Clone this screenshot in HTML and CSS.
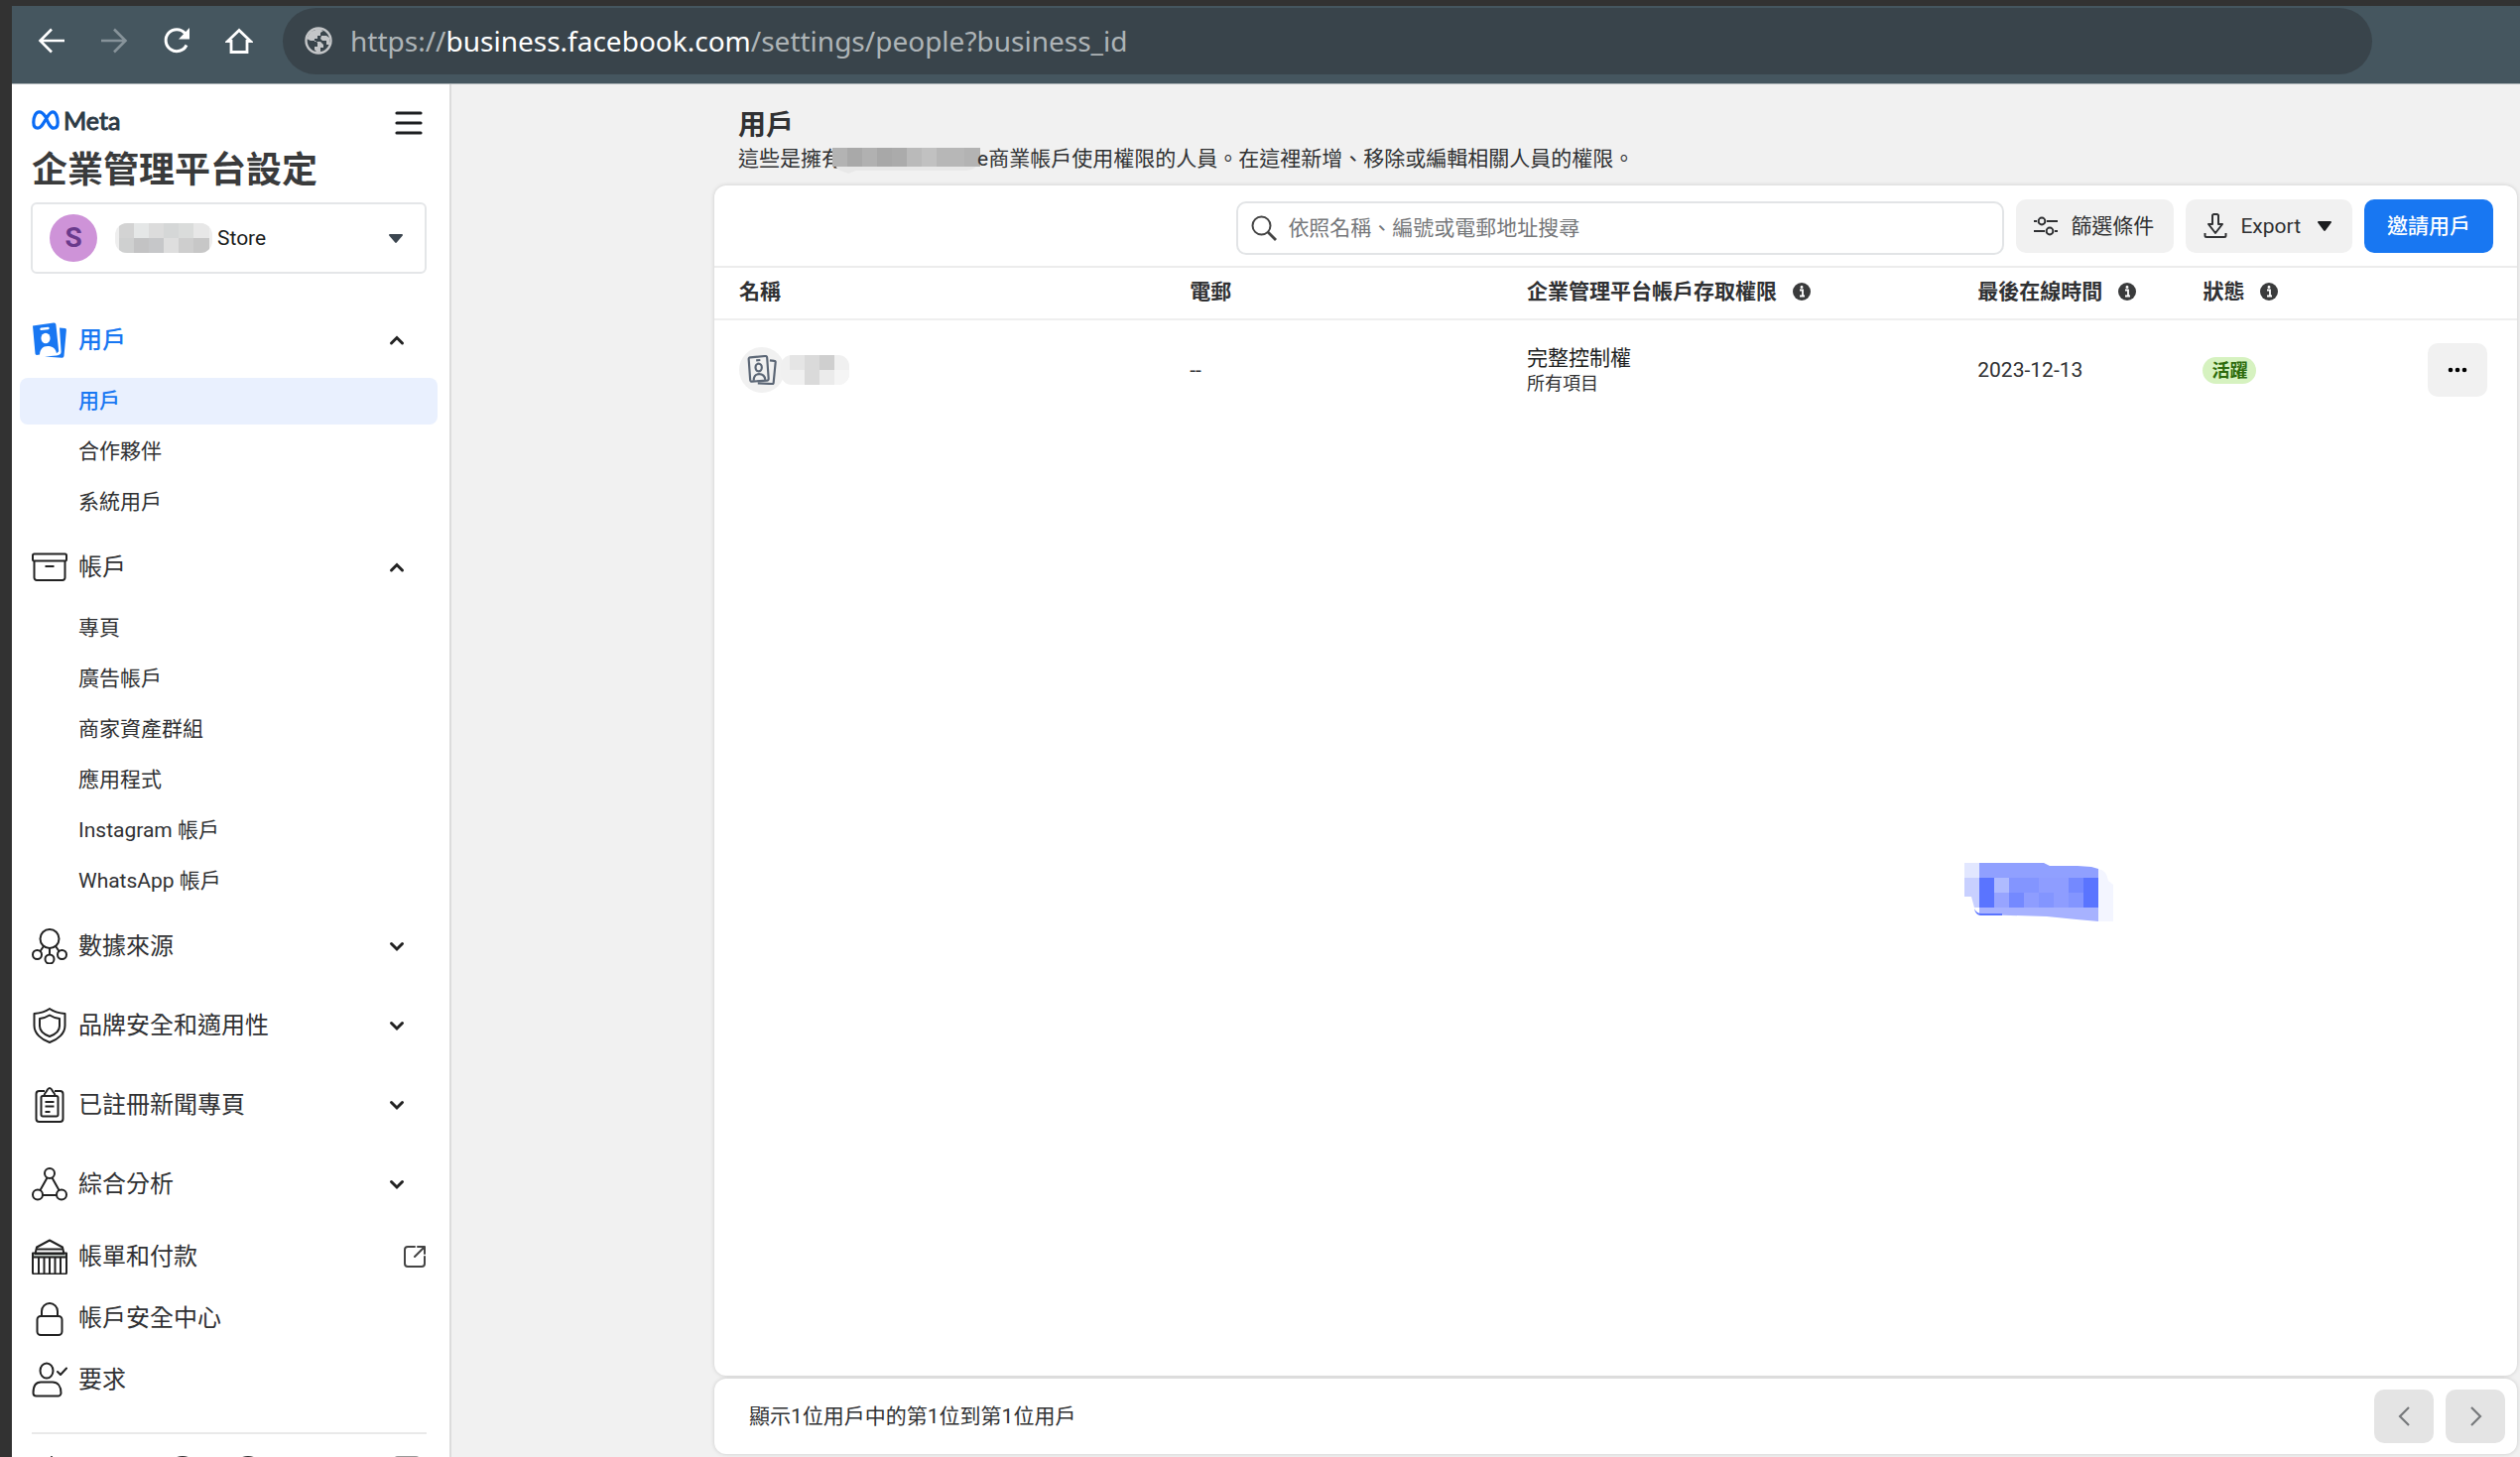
FILE: index.html
```html
<!DOCTYPE html>
<html lang="zh-Hant">
<head>
<meta charset="utf-8">
<meta name="viewport" content="width=device-width, initial-scale=1">
<title>企業管理平台設定</title>
<link rel="stylesheet" href="styles.css">
</head>
<body>
<header class="browser">
  <button class="nav-btn" type="button" aria-label="上一頁"><svg viewBox="0 0 28 28"><path d="M27 14H3M14 2.500 2.500 14 14 25.500" fill="none" stroke="currentColor" stroke-width="2.600"/></svg></button>
  <button class="nav-btn nav-btn-off" type="button" aria-label="下一頁" disabled><svg viewBox="0 0 28 28"><path d="M1 14h24M14 2.500 25.500 14 14 25.500" fill="none" stroke="currentColor" stroke-width="2.600"/></svg></button>
  <button class="nav-btn" type="button" aria-label="重新載入"><svg viewBox="0 0 28 28"><path d="M24 18.500A11 11 0 1 1 22.500 6.500" fill="none" stroke="currentColor" stroke-width="3"/><path d="M27 1v11.500H16z" fill="currentColor"/></svg></button>
  <button class="nav-btn" type="button" aria-label="首頁"><svg viewBox="0 0 28 28"><path d="M14 3.500 2.500 14.500H6V25.500H22V14.500H25.500z" fill="none" stroke="currentColor" stroke-width="2.800"/></svg></button>
  <div class="address">
    <svg class="globe" viewBox="0 0 28 28"><circle cx="14" cy="14" r="12.500" fill="none" stroke="currentColor" stroke-width="2.400"/><path d="M14 2 6 5 2 12l4 2h5l2 2v4h-3v3l3 3 3-1v-4h3v-3l-3-3h-6v-3h3V9h3V6l3-2z" fill="currentColor"/><path d="M17 9h5l3 2v7h-3v-4h-4l-2-2z" fill="currentColor"/></svg>
    <div class="url" role="textbox" aria-label="網址">https://<span class="url-host">business.facebook.com</span>/settings/people?business_id</div>
  </div>
</header>

<div class="app">
  <aside class="sidebar">
    <div class="brand-row">
      <div class="brand">
        <svg class="brand-mark" viewBox="0 0 28 20"><path d="M14 7C11.500 3 9.500 1.800 7.600 1.800 4 1.800 1.800 7 1.800 12.300c0 3.600 1.600 5.900 4.200 5.900 3 0 4.800-3 8-8.700s5-7.700 7-7.700c3.500 0 5.200 5.700 5.200 10.500 0 3.600-1.400 5.900-4 5.900-3.200 0-5.200-4-8.200-11.200z" fill="none" stroke="#0a6cf5" stroke-width="3.200" stroke-linejoin="round"/></svg>
        <span>Meta</span>
      </div>
      <button class="menu-btn" type="button" aria-label="選單"><svg viewBox="0 0 28 24"><path d="M2 2h24M2 12h24M2 22h24" stroke="currentColor" stroke-width="3.200" stroke-linecap="round"/></svg></button>
    </div>
    <h1 class="side-title">企業管理平台設定</h1>
    <button class="account" type="button">
      <span class="account-avatar">S</span>
      <svg class="account-mask" viewBox="0 0 98 30"><defs><clipPath id="mask-a"><rect width="98" height="30" rx="12"/></clipPath></defs><g clip-path="url(#mask-a)"><path fill="#eee" d="M0 0h98v30H0z"/><path fill="#d3d3d3" d="M4 0h15v15H4z"/><path fill="#e5e7e7" d="M19 0h15v15H19z"/><path fill="#dcdcdc" d="M34 0h15v15H34z"/><path fill="#d5d7d7" d="M49 0h15v15H49z"/><path fill="#dadcdb" d="M64 0h15v15H64z"/><path fill="#e7e7e7" d="M79 0h16v15H79z"/><path fill="#cfd0d0" d="M4 15h15v15H4z"/><path fill="#c3c3c4" d="M19 15h15v15H19z"/><path fill="#c6c7c9" d="M34 15h15v15H34z"/><path fill="#dedede" d="M49 15h15v15H49z"/><path fill="#cecece" d="M64 15h15v15H64z"/><path fill="#c7c7c7" d="M79 15h16v15H79z"/></g></svg>
      <span class="account-name">Store</span>
      <svg class="caret" viewBox="0 0 16 10"><path d="M2 1h12a1 1 0 0 1 .8 1.600L9 9.300a1.300 1.300 0 0 1-2 0L1.200 2.600A1 1 0 0 1 2 1z" fill="#3c4650"/></svg>
    </button>

    <nav class="nav">
      <section class="group">
        <button class="group-head group-head-on" type="button">
          <svg class="icon" viewBox="0 0 36 36"><path d="M1 3.500 22 .500a2 2 0 0 1 2.400 1.800l2.800 27-2.200 2c-1-5-4-7.300-9-7.300s-7.500 3-8 8.500L5 33a1.500 1.500 0 0 1-1.500-1.400z" fill="currentColor"/><path d="M28 5.500 33.500 6a1.500 1.500 0 0 1 1.400 1.700L32.500 34a2 2 0 0 1-2.200 1.700L13 34.500l12-1c3-.300 4.700-1.500 4.600-4z" fill="currentColor"/><ellipse cx="14" cy="16" rx="4.600" ry="5.200" fill="#fff"/><path d="m9.500 6.800 7-.8" stroke="#fff" stroke-width="2.400" stroke-linecap="round"/></svg>
          <span class="group-label">用戶</span>
          <svg class="chev" viewBox="0 0 16 16"><path d="m2.500 11 5.500-5.500 5.500 5.500" fill="none" stroke="currentColor" stroke-width="3" stroke-linecap="round"/></svg>
        </button>
        <ul class="items">
          <li><a class="item item-on" href="#">用戶</a></li>
          <li><a class="item" href="#">合作夥伴</a></li>
          <li><a class="item" href="#">系統用戶</a></li>
        </ul>
      </section>
      <section class="group">
        <button class="group-head" type="button">
          <svg class="icon" viewBox="0 0 36 36"><g fill="none" stroke="currentColor" stroke-width="2" stroke-linejoin="round"><rect x="1" y="4.500" width="34" height="7" rx="1.500"/><path d="M2.500 11.500v17a2.500 2.500 0 0 0 2.500 2.500h26a2.500 2.500 0 0 0 2.500-2.500v-17M13.500 17h9"/></g></svg>
          <span class="group-label">帳戶</span>
          <svg class="chev" viewBox="0 0 16 16"><path d="m2.500 11 5.500-5.500 5.500 5.500" fill="none" stroke="currentColor" stroke-width="3" stroke-linecap="round"/></svg>
        </button>
        <ul class="items">
          <li><a class="item" href="#">專頁</a></li>
          <li><a class="item" href="#">廣告帳戶</a></li>
          <li><a class="item" href="#">商家資產群組</a></li>
          <li><a class="item" href="#">應用程式</a></li>
          <li><a class="item" href="#">Instagram 帳戶</a></li>
          <li><a class="item" href="#">WhatsApp 帳戶</a></li>
        </ul>
      </section>
      <section class="group">
        <button class="group-head" type="button">
          <svg class="icon" viewBox="0 0 36 36"><g fill="none" stroke="currentColor" stroke-width="2"><circle cx="18" cy="10.500" r="9.500"/><circle cx="5.500" cy="26.500" r="4.500"/><circle cx="18" cy="31" r="4.500"/><circle cx="30.500" cy="26.500" r="4.500"/><path d="M12 18 8.500 23M24 18l3.500 5M18 20v6.500"/></g></svg>
          <span class="group-label">數據來源</span>
          <svg class="chev" viewBox="0 0 16 16"><path d="m2.500 5.500 5.500 5.500 5.500-5.500" fill="none" stroke="currentColor" stroke-width="3" stroke-linecap="round"/></svg>
        </button>
      </section>
      <section class="group">
        <button class="group-head" type="button">
          <svg class="icon" viewBox="0 0 36 36"><g fill="none" stroke="currentColor" stroke-width="2" stroke-linejoin="round"><path d="M18 1c4 3 9 4.500 15.500 5v12c0 8-7 14-15.500 17C9.500 32 2.500 26 2.500 18V6C9 5.500 14 4 18 1z"/><path d="M18 7.500c3 2 6 3 10 3.500v7.500c0 5-4.500 8.500-10 10.500-5.500-2-10-5.500-10-10.500V11c4-.500 7-1.500 10-3.500z"/></g></svg>
          <span class="group-label">品牌安全和適用性</span>
          <svg class="chev" viewBox="0 0 16 16"><path d="m2.500 5.500 5.500 5.500 5.500-5.500" fill="none" stroke="currentColor" stroke-width="3" stroke-linecap="round"/></svg>
        </button>
      </section>
      <section class="group">
        <button class="group-head" type="button">
          <svg class="icon" viewBox="0 0 36 36"><g fill="none" stroke="currentColor" stroke-width="2" stroke-linejoin="round"><path d="M13 4H7.500A3 3 0 0 0 4.500 7v25a3 3 0 0 0 3 3h21a3 3 0 0 0 3-3V7a3 3 0 0 0-3-3H23"/><path d="M13 9H11a1.500 1.500 0 0 0-1.500 1.500V28A1.500 1.500 0 0 0 11 29.500h14a1.500 1.500 0 0 0 1.500-1.500V10.500A1.500 1.500 0 0 0 25 9H12.500c0-3 1.500-3 2.500-5s1.500-3 3-3 2 1 3 3 2.500 2 2.500 5M13.500 15h9M13.500 19.500h9M13.500 25h5"/></g></svg>
          <span class="group-label">已註冊新聞專頁</span>
          <svg class="chev" viewBox="0 0 16 16"><path d="m2.500 5.500 5.500 5.500 5.500-5.500" fill="none" stroke="currentColor" stroke-width="3" stroke-linecap="round"/></svg>
        </button>
      </section>
      <section class="group">
        <button class="group-head" type="button">
          <svg class="icon" viewBox="0 0 36 36"><g fill="none" stroke="currentColor" stroke-width="2"><circle cx="18" cy="7" r="5"/><circle cx="6" cy="28.500" r="5"/><circle cx="30" cy="28.500" r="5"/><path d="M15.500 11.500 8.500 24M20.500 11.500l7 12.500M11 29h14"/></g></svg>
          <span class="group-label">綜合分析</span>
          <svg class="chev" viewBox="0 0 16 16"><path d="m2.500 5.500 5.500 5.500 5.500-5.500" fill="none" stroke="currentColor" stroke-width="3" stroke-linecap="round"/></svg>
        </button>
      </section>
      <a class="link-row" href="#">
        <svg class="icon" viewBox="0 0 36 36"><path d="M1 15h34v4H1z" fill="#c3cbc6"/><g fill="none" stroke="currentColor" stroke-width="2" stroke-linejoin="round"><path d="M18 1.500 5 8.500 3.500 15h29L31 8.500zM5 10.500h26M1 14.500h34v4H1zM1 18.500V34a1.500 1.500 0 0 0 1.500 1.500h31A1.500 1.500 0 0 0 35 34V18.500M7 18.500v17M12.500 18.500v17M18 18.500v17M23.500 18.500v17M29 18.500v17"/></g></svg>
        <span class="group-label">帳單和付款</span>
        <svg class="ext" viewBox="0 0 24 24"><path d="M12 2H5a3 3 0 0 0-3 3v14a3 3 0 0 0 3 3h14a3 3 0 0 0 3-3v-7M15 2h7v7M21.500 2.500 12 12" fill="none" stroke="currentColor" stroke-width="2" stroke-linecap="round" stroke-linejoin="round"/></svg>
      </a>
      <a class="link-row" href="#">
        <svg class="icon" viewBox="0 0 36 36"><g fill="none" stroke="currentColor" stroke-width="2"><rect x="5.500" y="16" width="25" height="19" rx="3.500"/><path d="M10 16v-5a8 8 0 0 1 16 0v5"/></g></svg>
        <span class="group-label">帳戶安全中心</span>
      </a>
      <a class="link-row" href="#">
        <svg class="icon" viewBox="0 0 36 36"><g fill="none" stroke="currentColor" stroke-width="2" stroke-linecap="round" stroke-linejoin="round"><ellipse cx="15" cy="9" rx="6.500" ry="7.500"/><path d="M9 20.500h12c5 0 8.500 4 8.500 11a3 3 0 0 1-3 3h-22a3 3 0 0 1-3-3c0-7 2.500-11 7.500-11zM26 10l3 3 6-6.500"/></g></svg>
        <span class="group-label">要求</span>
      </a>
    </nav>
    <div class="side-foot">
      <button type="button" aria-label="設定"><svg viewBox="0 0 32 32"><path d="m16 1 4 6h9v18H3V7h9z" fill="none" stroke="currentColor" stroke-width="2"/></svg></button>
      <button type="button" aria-label="通知"><svg viewBox="0 0 32 32"><path d="M16 1v4M5 25V14a11 9 0 0 1 22 0v11z" fill="none" stroke="currentColor" stroke-width="3"/></svg></button>
      <button type="button" aria-label="搜尋"><svg viewBox="0 0 32 32"><circle cx="16" cy="16" r="15" fill="none" stroke="currentColor" stroke-width="2"/></svg></button>
      <button type="button" aria-label="說明"><svg viewBox="0 0 32 32"><circle cx="16" cy="16" r="15" fill="none" stroke="currentColor" stroke-width="2"/></svg></button>
      <button class="push" type="button" aria-label="收合"><svg viewBox="0 0 32 32"><rect x="4" y="1" width="24" height="28" rx="3" fill="none" stroke="#999" stroke-width="2"/></svg></button>
    </div>
  </aside>

  <main class="main">
    <div class="page-head">
      <h2>用戶</h2>
      <p>這些是擁有<svg class="desc-mask" viewBox="0 0 150 30"><path fill="#e8e8e8" d="M2 10h146v8q-4 9-14 9H24l-8 3-8-3q-6-3-6-9z"/><path fill="#b3b3b3" d="M0 4h149v19H0z"/><path fill="#a9a9a9" d="M15 4h15v19H15z"/><path fill="#b1b1b1" d="M30 4h15v19H30z"/><path fill="#a8a8a8" d="M45 4h15v19H45z"/><path fill="#ababab" d="M60 4h15v19H60z"/><path fill="#bababa" d="M75 4h15v19H75z"/><path fill="#c1c1c1" d="M90 4h15v19H90z"/><path fill="#b7b7b7" d="M105 4h28v19h-28z"/></svg>e商業帳戶使用權限的人員。在這裡新增、移除或編輯相關人員的權限。</p>
    </div>
    <div class="card list-card">
      <div class="toolbar">
        <div class="search">
          <svg viewBox="0 0 26 26"><circle cx="10.500" cy="10.500" r="9" fill="none" stroke="#444" stroke-width="2"/><path d="m17 17 8 8" stroke="#444" stroke-width="2.800"/></svg>
          <label class="sr" for="q">搜尋用戶</label>
          <input id="q" type="text" placeholder="依照名稱、編號或電郵地址搜尋">
        </div>
        <button class="btn" type="button">
          <svg class="btn-icon" viewBox="0 0 26 26"><g fill="none" stroke="currentColor" stroke-width="2"><circle cx="9" cy="8" r="3.400"/><circle cx="17" cy="18" r="3.400"/><path d="M1 8h3M14 8h11M1 18h11M22 18h3"/></g></svg>
          <span>篩選條件</span>
        </button>
        <button class="btn" type="button">
          <svg class="btn-icon" viewBox="0 0 26 26"><path d="M10 2a2 2 0 0 1 2-1h2a2 2 0 0 1 2 1v9h4l-7 9-7-9h4zM2.500 20v2.500A1.500 1.500 0 0 0 4 24h18a1.500 1.500 0 0 0 1.500-1.500V20" fill="none" stroke="currentColor" stroke-width="2" stroke-linejoin="round"/></svg>
          <span>Export</span>
          <svg class="caret btn-caret" viewBox="0 0 16 10"><path d="M2 0h12a1 1 0 0 1 .8 1.600L9 9.300a1.300 1.300 0 0 1-2 0L1.200 1.600A1 1 0 0 1 2 0z" fill="#1c1e21"/></svg>
        </button>
        <button class="btn btn-primary" type="button">邀請用戶</button>
      </div>
      <table class="people">
        <colgroup><col class="c-name"><col class="c-mail"><col class="c-access"><col class="c-last"><col class="c-status"><col class="c-more"></colgroup>
        <thead>
          <tr>
            <th scope="col">名稱</th>
            <th scope="col">電郵</th>
            <th scope="col"><span class="th">企業管理平台帳戶存取權限 <svg viewBox="0 0 18 18"><circle cx="9" cy="9" r="9" fill="#3a3b3c"/><path d="M7 7.500h3V13M7 13.500h5" fill="none" stroke="#fff" stroke-width="1.800"/><circle cx="9" cy="4.500" r="1.400" fill="#fff"/></svg></span></th>
            <th scope="col"><span class="th">最後在線時間 <svg viewBox="0 0 18 18"><circle cx="9" cy="9" r="9" fill="#3a3b3c"/><path d="M7 7.500h3V13M7 13.500h5" fill="none" stroke="#fff" stroke-width="1.800"/><circle cx="9" cy="4.500" r="1.400" fill="#fff"/></svg></span></th>
            <th scope="col"><span class="th">狀態 <svg viewBox="0 0 18 18"><circle cx="9" cy="9" r="9" fill="#3a3b3c"/><path d="M7 7.500h3V13M7 13.500h5" fill="none" stroke="#fff" stroke-width="1.800"/><circle cx="9" cy="4.500" r="1.400" fill="#fff"/></svg></span></th>
            <th></th>
          </tr>
        </thead>
        <tbody>
          <tr>
            <td><div class="person">
              <span class="person-icon"><svg viewBox="0 0 36 36"><g fill="none" stroke="#5b6675" stroke-width="2.600" stroke-linejoin="round"><path d="M2 5a2 2 0 0 1 1.800-2.200L22 1.200a2 2 0 0 1 2.200 1.800L26 28.500a2 2 0 0 1-1.800 2.200L6 32a2 2 0 0 1-2.200-1.800z"/><path d="M27.500 6.500 33 7a1.500 1.500 0 0 1 1.400 1.700L32 33.500a1.500 1.500 0 0 1-1.700 1.400L13 34"/><ellipse cx="14" cy="15" rx="3.800" ry="4.600"/><path d="M8 31c0-6 2-8 6.500-8s7 2 7.500 7M11 6.500l5-.5"/></g></svg></span>
              <svg class="person-mask" viewBox="0 0 69 30"><defs><clipPath id="mask-b"><rect width="69" height="30" rx="11"/></clipPath></defs><g clip-path="url(#mask-b)"><path fill="#f0f0f0" d="M0 0h69v30H0z"/><path fill="#e5e5e5" d="M9 0h15v15H9z"/><path fill="#dadada" d="M24 0h15v30H24z"/><path fill="#cfcfcf" d="M39 0h15v15H39z"/><path fill="#ebebeb" d="M39 15h15v15H39z"/><path fill="#f5f5f5" d="M54 15h15v15H54z"/></g></svg>
            </div></td>
            <td>--</td>
            <td><div class="access">完整控制權</div><div class="access-sub">所有項目</div></td>
            <td>2023-12-13</td>
            <td><span class="badge">活躍</span></td>
            <td class="more-cell"><button class="sq" type="button" aria-label="更多"><svg viewBox="0 0 20 6"><circle cx="3" cy="3" r="2.300"/><circle cx="10" cy="3" r="2.300"/><circle cx="17" cy="3" r="2.300"/></svg></button></td>
          </tr>
        </tbody>
      </table>
    </div>
    <div class="card foot-card">
      <span>顯示1位用戶中的第1位到第1位用戶</span>
      <div class="pager">
        <button class="sq sq-off" type="button" aria-label="上一頁" disabled><svg viewBox="0 0 20 22"><path d="M15 2 6 11l9 9" fill="none" stroke="#77797c" stroke-width="2.200"/></svg></button>
        <button class="sq sq-off" type="button" aria-label="下一頁" disabled><svg viewBox="0 0 20 22"><path d="m6 2 9 9-9 9" fill="none" stroke="#77797c" stroke-width="2.200"/></svg></button>
      </div>
    </div>
    <svg class="blot" viewBox="0 0 150 60"><path fill="#e2e7ff" d="M0 0h15v15H0z"/><path fill="#c8d0ff" d="M0 15h15v30h-5L7 34H0z"/><path fill="#90a0ff" d="M15 0h65l6 3h28l14 1 7 2v10H15z"/><path fill="#a7b2ff" d="M15 45h120v14l-22-2-30-3-68-2z"/><path fill="#8395ff" d="M15 15h120v30H15z"/><path fill="#5a74ff" d="M15 15h15v30H15zM120 15h15v30h-15z"/><path fill="#afbbff" d="M30 15h15v15H30z"/><path fill="#97a4ff" d="M30 30h15v15H30z"/><path fill="#7489ff" d="M45 30h15v15H45zM105 15h15v15h-15z"/><path fill="#8e9dff" d="M60 30h15v15H60zM90 15h15v30H90zM75 15h15v15H75z"/><path fill="#5a74ff" d="M10 46q2 5 7 5h21v2H16q-5-1-6-7z"/><path fill="#f3f5ff" d="M135 6q8 1 10 12l5 4v37h-15z"/></svg>
  </main>
</div>
</body>
</html>
```
FILE: styles.css
```css
*, *::before, *::after { box-sizing: border-box; }

body {
  margin: 0;
  height: 100vh;
  padding: 6px 0 0 12px;
  display: flex;
  flex-direction: column;
  overflow: hidden;
  background: #323232;
  color: #303133;
  font-family: Roboto, "Noto Sans CJK TC", sans-serif;
  font-size: 21px;
  line-height: 28px;
}

button, input { font: inherit; color: inherit; }
button { border: 0; padding: 0; background: none; cursor: pointer; }
a { color: inherit; text-decoration: none; }
svg { display: block; flex: none; }
h1, h2, p, ul { margin: 0; padding: 0; }
ul { list-style: none; }

.sr {
  position: absolute;
  width: 1px;
  height: 1px;
  overflow: hidden;
  clip-path: inset(50%);
}

/* Browser bar */
.browser {
  flex: none;
  display: flex;
  align-items: center;
  gap: 35px;
  height: 79px;
  padding: 1px 149px 9px 26px;
  background: #45565f;
  border-bottom: 1px solid #a9b0b4;
}
.nav-btn { width: 28px; height: 28px; color: #fff; }
.nav-btn-off { color: #87939a; }
.address {
  flex: 1;
  display: flex;
  align-items: center;
  gap: 18px;
  height: 67px;
  margin-left: -5px;
  padding-left: 22px;
  border-radius: 34px;
  background: #39444b;
}
.globe { width: 28px; height: 28px; color: #c4c6c8; }
.url {
  font-family: "Noto Sans", sans-serif;
  font-size: 28px;
  line-height: 36px;
  color: #aeb4b7;
  white-space: nowrap;
}
.url-host { color: #fff; }

.app { flex: 1; min-height: 0; display: flex; }

/* Sidebar */
.sidebar {
  flex: none;
  display: flex;
  flex-direction: column;
  width: 443px;
  padding-top: 18px;
  overflow: hidden;
  background: #fff;
  border-right: 2px solid #dcdcdc;
}
.brand-row {
  flex: none;
  display: flex;
  justify-content: space-between;
  align-items: center;
  height: 36px;
  padding: 0 27px 0 20px;
}
.brand {
  display: flex;
  align-items: center;
  gap: 4px;
  font-family: Lato, sans-serif;
  font-size: 25px;
  color: #2c3a45;
}
.brand span { -webkit-text-stroke: 1px #2c3a45; }
.brand-mark { width: 28px; height: 20px; }
.menu-btn { padding-top: 6px; color: #1c1e21; }
.menu-btn svg { width: 28px; height: 24px; }
.side-title {
  flex: none;
  margin: 9px 20px 0;
  color: #3a3b3c;
  font-size: 36px;
  line-height: 48px;
  font-weight: 700;
  white-space: nowrap;
}
.account {
  flex: none;
  display: flex;
  align-items: center;
  height: 72px;
  margin: 8px 23px 29px 19px;
  padding: 0 21px 0 17px;
  border: 2px solid #e4e6e8;
  border-radius: 6px;
}
.account-avatar {
  width: 48px;
  height: 48px;
  border-radius: 50%;
  background: #ce93d8;
  color: #6a3a8c;
  font-size: 28px;
  line-height: 48px;
  font-weight: 700;
}
.account-mask { width: 98px; height: 30px; margin: 0 5px 0 18px; }
.account-name { color: #1c1e21; }
.caret { width: 16px; height: 10px; margin-left: auto; }

.nav { flex: none; display: flex; flex-direction: column; }
.group { margin-bottom: 4px; }
.group-head, .link-row {
  display: flex;
  align-items: center;
  width: 100%;
  padding: 0 23px 0 20px;
  font-size: 24px;
  line-height: 32px;
}
.group-head { height: 76px; }
.link-row { height: 62px; }
.group-label { margin-left: 11px; }
.group-head-on { color: #1877f2; font-weight: 500; }
.icon { width: 36px; height: 36px; color: #222; }
.group-head-on .icon { color: #1877f2; }
.chev { width: 16px; height: 16px; margin: 0 22px 0 auto; color: #222; }
.ext { width: 24px; height: 24px; margin-left: auto; color: #444; }
.items { display: flex; flex-direction: column; gap: 4px; }
.item {
  display: block;
  height: 47px;
  margin: 0 12px 0 8px;
  padding-left: 59px;
  border-radius: 8px;
  line-height: 47px;
}
.item-on { background: #e9f0fe; color: #1877f2; font-weight: 500; }
.side-foot {
  flex: none;
  display: flex;
  gap: 34px;
  margin: 22px 23px 0 20px;
  padding: 22px 4px 0;
  border-top: 2px solid #e9e9e9;
}
.side-foot svg { width: 32px; height: 32px; }
.push { margin-left: auto; }

/* Main column */
.main {
  position: relative;
  flex: 1;
  min-width: 0;
  display: flex;
  flex-direction: column;
  padding: 24px 3px 3px 265px;
  background: #f1f1f1;
}
.page-head { height: 78px; padding-left: 24px; }
.page-head h2 { font-size: 28px; line-height: 36px; font-weight: 700; }
.page-head p { display: flex; align-items: center; line-height: 30px; white-space: nowrap; }
.desc-mask { width: 150px; height: 30px; margin: 0 -4px 0 -10px; }
.card {
  background: #fff;
  border-radius: 12px;
  box-shadow: 0 0 4px rgba(0, 0, 0, .16);
}
.list-card { flex: 1; min-height: 0; margin-bottom: 3px; }
.toolbar {
  display: flex;
  justify-content: flex-end;
  gap: 12px;
  height: 83px;
  padding: 14px 24px 0;
  border-bottom: 2px solid #ececec;
}
.search {
  display: flex;
  align-items: center;
  gap: 11px;
  flex: 0 0 774px;
  height: 54px;
  margin-top: 2px;
  padding: 0 13px;
  border: 2px solid #e2e4e6;
  border-radius: 10px;
}
.search svg { width: 26px; height: 26px; }
.search input { flex: 1; min-width: 0; height: 48px; padding: 0; border: 0; outline: 0; background: none; }
.search input::placeholder { color: #75777a; opacity: 1; }
.btn {
  display: flex;
  align-items: center;
  gap: 12px;
  height: 54px;
  padding: 0 20px 0 17px;
  border-radius: 10px;
  background: #f1f1f1;
}
.btn-icon { width: 26px; height: 26px; }
.btn-caret { margin-left: 4px; }
.btn-primary { padding: 0 23px; background: #1877f2; color: #fff; font-weight: 500; }

.people { width: 100%; table-layout: fixed; border-collapse: collapse; text-align: left; }
.c-name, .c-access { width: 25%; }
.c-mail { width: 18.7%; }
.c-last { width: 12.5%; }
.people th { height: 52px; padding: 0 0 4px 25px; font-weight: 700; border-bottom: 2px solid #efefef; }
.people td { height: 100px; padding: 0 0 0 25px; }
.th { display: flex; align-items: center; gap: 16px; }
.th svg { width: 18px; height: 18px; }
.person { display: flex; align-items: center; }
.person-icon {
  display: flex;
  align-items: center;
  justify-content: center;
  width: 46px;
  height: 46px;
  border-radius: 50%;
  background: #f1f1f1;
}
.person-icon svg { width: 30px; height: 30px; }
.person-mask { width: 69px; height: 30px; margin-left: -4px; }
.access { color: #1c1e21; }
.access-sub { font-size: 18px; line-height: 24px; }
.badge {
  display: inline-block;
  padding: 0 9px;
  border-radius: 14px;
  background: #d6f2c0;
  color: #2d6b0b;
  font-size: 18px;
  line-height: 27px;
  font-weight: 700;
}
.people .more-cell { padding: 0 30px 0 0; }
.sq {
  display: flex;
  align-items: center;
  justify-content: center;
  width: 60px;
  height: 54px;
  border-radius: 10px;
  background: #f1f1f1;
}
.more-cell .sq { margin-left: auto; }
.sq svg { width: 20px; }
.sq-off { background: #e4e4e4; }
.foot-card {
  flex: none;
  display: flex;
  justify-content: space-between;
  align-items: center;
  height: 76px;
  padding: 0 12px 0 35px;
}
.pager { display: flex; gap: 12px; }

.blot { position: absolute; left: 70%; top: 785px; width: 150px; height: 60px; margin-left: 65px; }
```
